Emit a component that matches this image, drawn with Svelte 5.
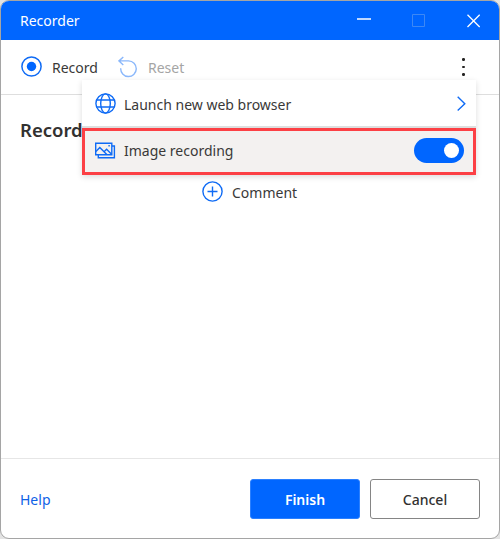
<script>
  let imageRecording = $state(true);
</script>

<div class="window">
  <header>
    <span class="title">Recorder</span>
    <div class="controls">
      <svg width="14" height="14" viewBox="0 0 14 14"><path d="M0 5H14" stroke="#fff" stroke-width="1.7" /></svg>
      <svg class="max" width="14" height="14" viewBox="0 0 14 14"><path d="M.5 .5H12.5V12.5H.5Z" fill="none" stroke="#3d88f5" /></svg>
      <svg width="14" height="14" viewBox="0 0 14 14"><path d="M.5 .8L12.7 13M12.7 .8L.5 13" stroke="#fff" stroke-width="1.3" /></svg>
    </div>
  </header>

  <div class="toolbar">
    <svg width="22" height="22" viewBox="0 0 22 22">
      <circle cx="10.5" cy="10.5" r="9.6" fill="none" stroke="#0f6bf5" stroke-width="1.5" />
      <circle cx="10.5" cy="10.5" r="4.7" fill="#0066ff" />
    </svg>
    <span class="t record">Record</span>
    <svg class="undo" width="20" height="22" viewBox="0 0 20 22" fill="none" stroke="#8bb8fb" stroke-width="1.4">
      <path d="M5.3 .9L1 4.9L5.3 9M1 4.9H10.5A7.8 7.8 0 1 1 2.7 12.2" />
    </svg>
    <span class="t reset">Reset</span>
    <div class="more"><i></i><i></i><i></i></div>

    <div class="menu">
      <div class="item launch">
        <svg width="22" height="22" viewBox="0 0 22 22" fill="none" stroke="#0f6bf5" stroke-width="1.4">
          <circle cx="10.5" cy="10.5" r="9.6" />
          <ellipse cx="10.5" cy="10.5" rx="4.8" ry="9.6" />
          <path d="M1.5 7H19.5M1.5 14H19.5" />
        </svg>
        <span class="t web">Launch new web browser</span>
        <svg class="chev" width="9" height="16" viewBox="0 0 9 16"><path d="M.7 .8L7.8 7.7L.7 14.6" fill="none" stroke="#0f6bf5" stroke-width="1.4" /></svg>
      </div>
      <div class="item image">
        <svg width="22" height="18" viewBox="0 0 22 18" fill="none" stroke="#0f6bf5" stroke-width="1.4">
          <path d="M.7 1.2H16.8V12.8H.7ZM16.8 4H19.4V15.7H3.3V12.8" />
          <path d="M.9 9.5L4.8 5.4L11.8 12.6M9 9.7L11.6 7.2L16.6 12.2" />
          <path d="M13.4 3.7H14.8" />
        </svg>
        <span class="t img">Image recording</span>
        <button class="toggle" class:on={imageRecording} aria-label="Image recording" onclick={() => (imageRecording = !imageRecording)}><i></i></button>
      </div>
    </div>
  </div>

  <main>
    <h1>Record</h1>
    <div class="comment">
      <svg width="22" height="22" viewBox="0 0 22 22" fill="none" stroke="#0f6bf5" stroke-width="1.4"><circle cx="10.5" cy="10.5" r="9.6" /><path d="M10.5 5.5V15.5M5.5 10.5H15.5" /></svg>
      <span class="t">Comment</span>
    </div>
  </main>

  <footer>
    <a href="#help">Help</a>
    <button class="finish">Finish</button>
    <button class="cancel">Cancel</button>
  </footer>
</div>

<style>
  :global(body) { background: #e3e3e3; }
  .window {
    box-sizing: border-box; width: 500px; height: 539px; overflow: hidden;
    display: flex; flex-direction: column; background: #fff;
    border: 1px solid #a5a5a5; border-radius: 9px;
    font: 14px/20px "Noto Sans", sans-serif; color: #3a3938;
  }
  svg { flex: none; display: block; }
  .t { white-space: nowrap; padding-top: 1px; }
  header { height: 39px; flex: none; background: #0066ff; color: #fff; display: flex; align-items: center; justify-content: space-between; padding: 0 18px 0 19px; }
  .controls { display: flex; gap: 41px; }
  .toolbar { position: relative; height: 54px; flex: none; border-bottom: 1px solid #dedede; display: flex; align-items: center; padding-left: 20px; }
  .record { margin-left: 9px; width: 47px; }
  .undo { margin-left: 19px; }
  .reset { margin-left: 10px; color: #a5a5a5; }
  .more { margin-left: auto; margin-right: 34.5px; display: flex; flex-direction: column; gap: 5px; }
  .more i { width: 2.7px; height: 2.7px; border-radius: 50%; background: #252423; }
  .menu { position: absolute; z-index: 2; left: 81px; top: 40px; width: 394px; background: #fff; box-shadow: 0 2px 6px rgba(0,0,0,.14); }
  .item { box-sizing: border-box; display: flex; align-items: center; }
  .launch { height: 48px; padding: 2px 10px 0 13px; border-bottom: 2px solid #dedede; }
  .web { margin-left: 7px; }
  .chev { margin-left: auto; }
  .image { height: 47px; padding: 0 9px 2px 10px; border: 3px solid #fc4045; background: #f3f1f0; }
  .img { margin-left: 7px; }
  .toggle { margin-left: auto; width: 50px; height: 25px; border: 0; border-radius: 13px; padding: 0 5px; background: #8a8886; display: flex; align-items: center; }
  .toggle.on { background: #0066ff; justify-content: flex-end; }
  .toggle i { width: 15px; height: 15px; border-radius: 50%; background: #fff; }
  main { flex: 1; overflow: hidden; }
  h1 { margin: 22px 0 0 19px; font: 600 18.5px/26px "Noto Sans", sans-serif; color: #323130; white-space: nowrap; }
  .comment { display: flex; align-items: center; margin: 38px 0 0 201px; gap: 8px; }
  footer { height: 79px; flex: none; border-top: 1px solid #e6e6e6; display: flex; align-items: center; padding: 0 19px; gap: 10px; }
  a { color: #0f62e6; text-decoration: none; margin-right: auto; padding-top: 2px; }
  footer button { box-sizing: border-box; width: 110px; height: 40px; border-radius: 3px; font: 500 14px/20px "Noto Sans", sans-serif; padding: 2px 0 0; }
  .finish { background: #0066ff; color: #fff; border: 1px solid #2b80ff; }
  .finish.finish { font-weight: 600; }
  .cancel { background: #fff; border: 1px solid #858585; color: #323130; }
</style>
